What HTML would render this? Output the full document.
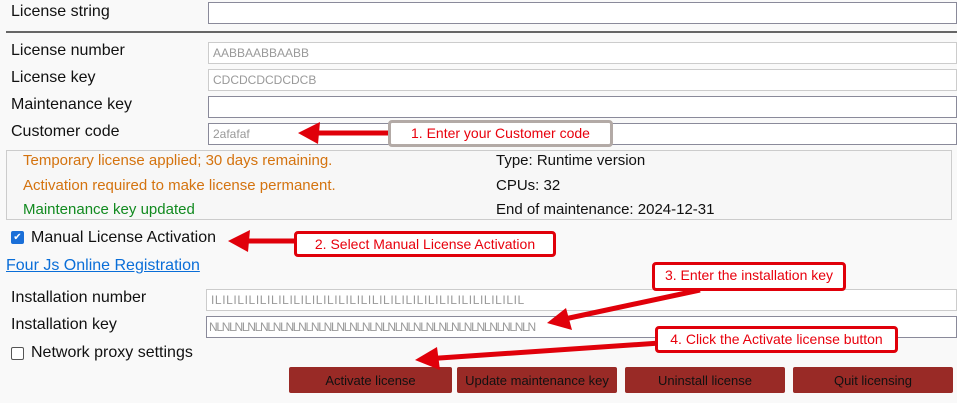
<!DOCTYPE html>
<html><head><style>
body{margin:0;width:957px;height:403px;background:#f9f9f9;font-family:"Liberation Sans",Arial,sans-serif;position:relative;overflow:hidden;color:#111}
.a{position:absolute;white-space:nowrap}
.lbl{font-size:16px}
.in{position:absolute;background:#fff;border:1px solid #8a8a9a;box-sizing:border-box;height:22px;font-size:12px;color:#999;padding-left:4px;line-height:20px;right:0;overflow:hidden;white-space:nowrap}
.ro{border-color:#ccc}
.btn{position:absolute;top:367px;height:26px;background:#992a26;border-radius:2px;font-size:13px;color:#111;text-align:center;line-height:27px}
.co{position:absolute;background:#fff;border:3px solid #e0000a;border-radius:4px;box-sizing:border-box;color:#e8000c;font-size:14px;line-height:20px;text-align:center}
.cb{position:absolute;width:11px;height:11px;border:1px solid #555;background:#fff;border-radius:2px}
</style></head><body>
<div class="a lbl" style="left:11px;top:3px">License string</div>
<div class="in" style="left:208px;top:2px"></div>
<div class="a" style="left:6px;right:0;top:31px;height:2px;background:#666"></div>
<div class="a lbl" style="left:11px;top:42px">License number</div>
<div class="in ro" style="left:208px;top:42px">AABBAABBAABB</div>
<div class="a lbl" style="left:11px;top:69px">License key</div>
<div class="in ro" style="left:208px;top:69px">CDCDCDCDCDCB</div>
<div class="a lbl" style="left:11px;top:96px">Maintenance key</div>
<div class="in" style="left:208px;top:96px"></div>
<div class="a lbl" style="left:11px;top:123px">Customer code</div>
<div class="in" style="left:208px;top:123px">2afafaf</div>
<div class="a" style="left:6px;width:946px;top:150px;height:70px;border:1px solid #ccc;box-sizing:border-box;background:#f7f7f7"></div>
<div class="a" style="left:23px;top:152px;font-size:15px;color:#d4730f">Temporary license applied; 30 days remaining.</div>
<div class="a" style="left:23px;top:177px;font-size:15px;color:#d4730f">Activation required to make license permanent.</div>
<div class="a" style="left:23px;top:201px;font-size:15px;color:#118a1f">Maintenance key updated</div>
<div class="a" style="left:496px;top:152px;font-size:15px">Type: Runtime version</div>
<div class="a" style="left:496px;top:177px;font-size:15px">CPUs: 32</div>
<div class="a" style="left:496px;top:201px;font-size:15px">End of maintenance: 2024-12-31</div>
<div class="cb" style="left:11px;top:231px;background:#1a6fd8;border-color:#1a6fd8;color:#fff;font-size:10px;line-height:11px;text-align:center">✔</div>
<div class="a lbl" style="left:31px;top:229px">Manual License Activation</div>
<div class="a" style="left:6px;top:257px;font-size:16px;color:#0a6ed8;text-decoration:underline">Four Js Online Registration</div>
<div class="a lbl" style="left:11px;top:289px">Installation number</div>
<div class="in ro" style="left:206px;top:289px;letter-spacing:0.6px">ILILILILILILILILILILILILILILILILILILILILILILILILILILILIL</div>
<div class="a lbl" style="left:11px;top:316px">Installation key</div>
<div class="in" style="left:206px;top:316px;padding-left:2px;letter-spacing:-1.3px">NLNLNLNLNLNLNLNLNLNLNLNLNLNLNLNLNLNLNLNLNLNLNLNLNLN</div>
<div class="cb" style="left:11px;top:347px"></div>
<div class="a lbl" style="left:31px;top:344px">Network proxy settings</div>
<div class="btn" style="left:289px;width:163px">Activate license</div>
<div class="btn" style="left:457px;width:160px">Update maintenance key</div>
<div class="btn" style="left:625px;width:160px">Uninstall license</div>
<div class="btn" style="left:793px;width:160px">Quit licensing</div>
<svg class="a" style="left:0;top:0" width="957" height="403">
<g fill="#e0000a" stroke="#e0000a">
<line x1="312" y1="133" x2="390" y2="133" stroke-width="5"/>
<polygon points="298,133 320,122 318,144" stroke="none"/>
<line x1="242" y1="241" x2="296" y2="241" stroke-width="5"/>
<polygon points="228,241 250,230 248,252" stroke="none"/>
<line x1="700" y1="290" x2="560" y2="320" stroke-width="5"/>
<polygon points="547,323 566,308 572,330" stroke="none"/>
<line x1="660" y1="343" x2="425" y2="359" stroke-width="5"/>
<polygon points="415,360 437,347 440,370" stroke="none"/>
</g></svg>
<div class="co" style="left:388px;top:120px;width:225px;height:27px;border-color:#b3aaa6">1. Enter your Customer code</div>
<div class="co" style="left:294px;top:231px;width:262px;height:26px">2. Select Manual License Activation</div>
<div class="co" style="left:652px;top:262px;width:194px;height:29px">3. Enter the installation key</div>
<div class="co" style="left:655px;top:326px;width:243px;height:27px">4. Click the Activate license button</div>
</body></html>
